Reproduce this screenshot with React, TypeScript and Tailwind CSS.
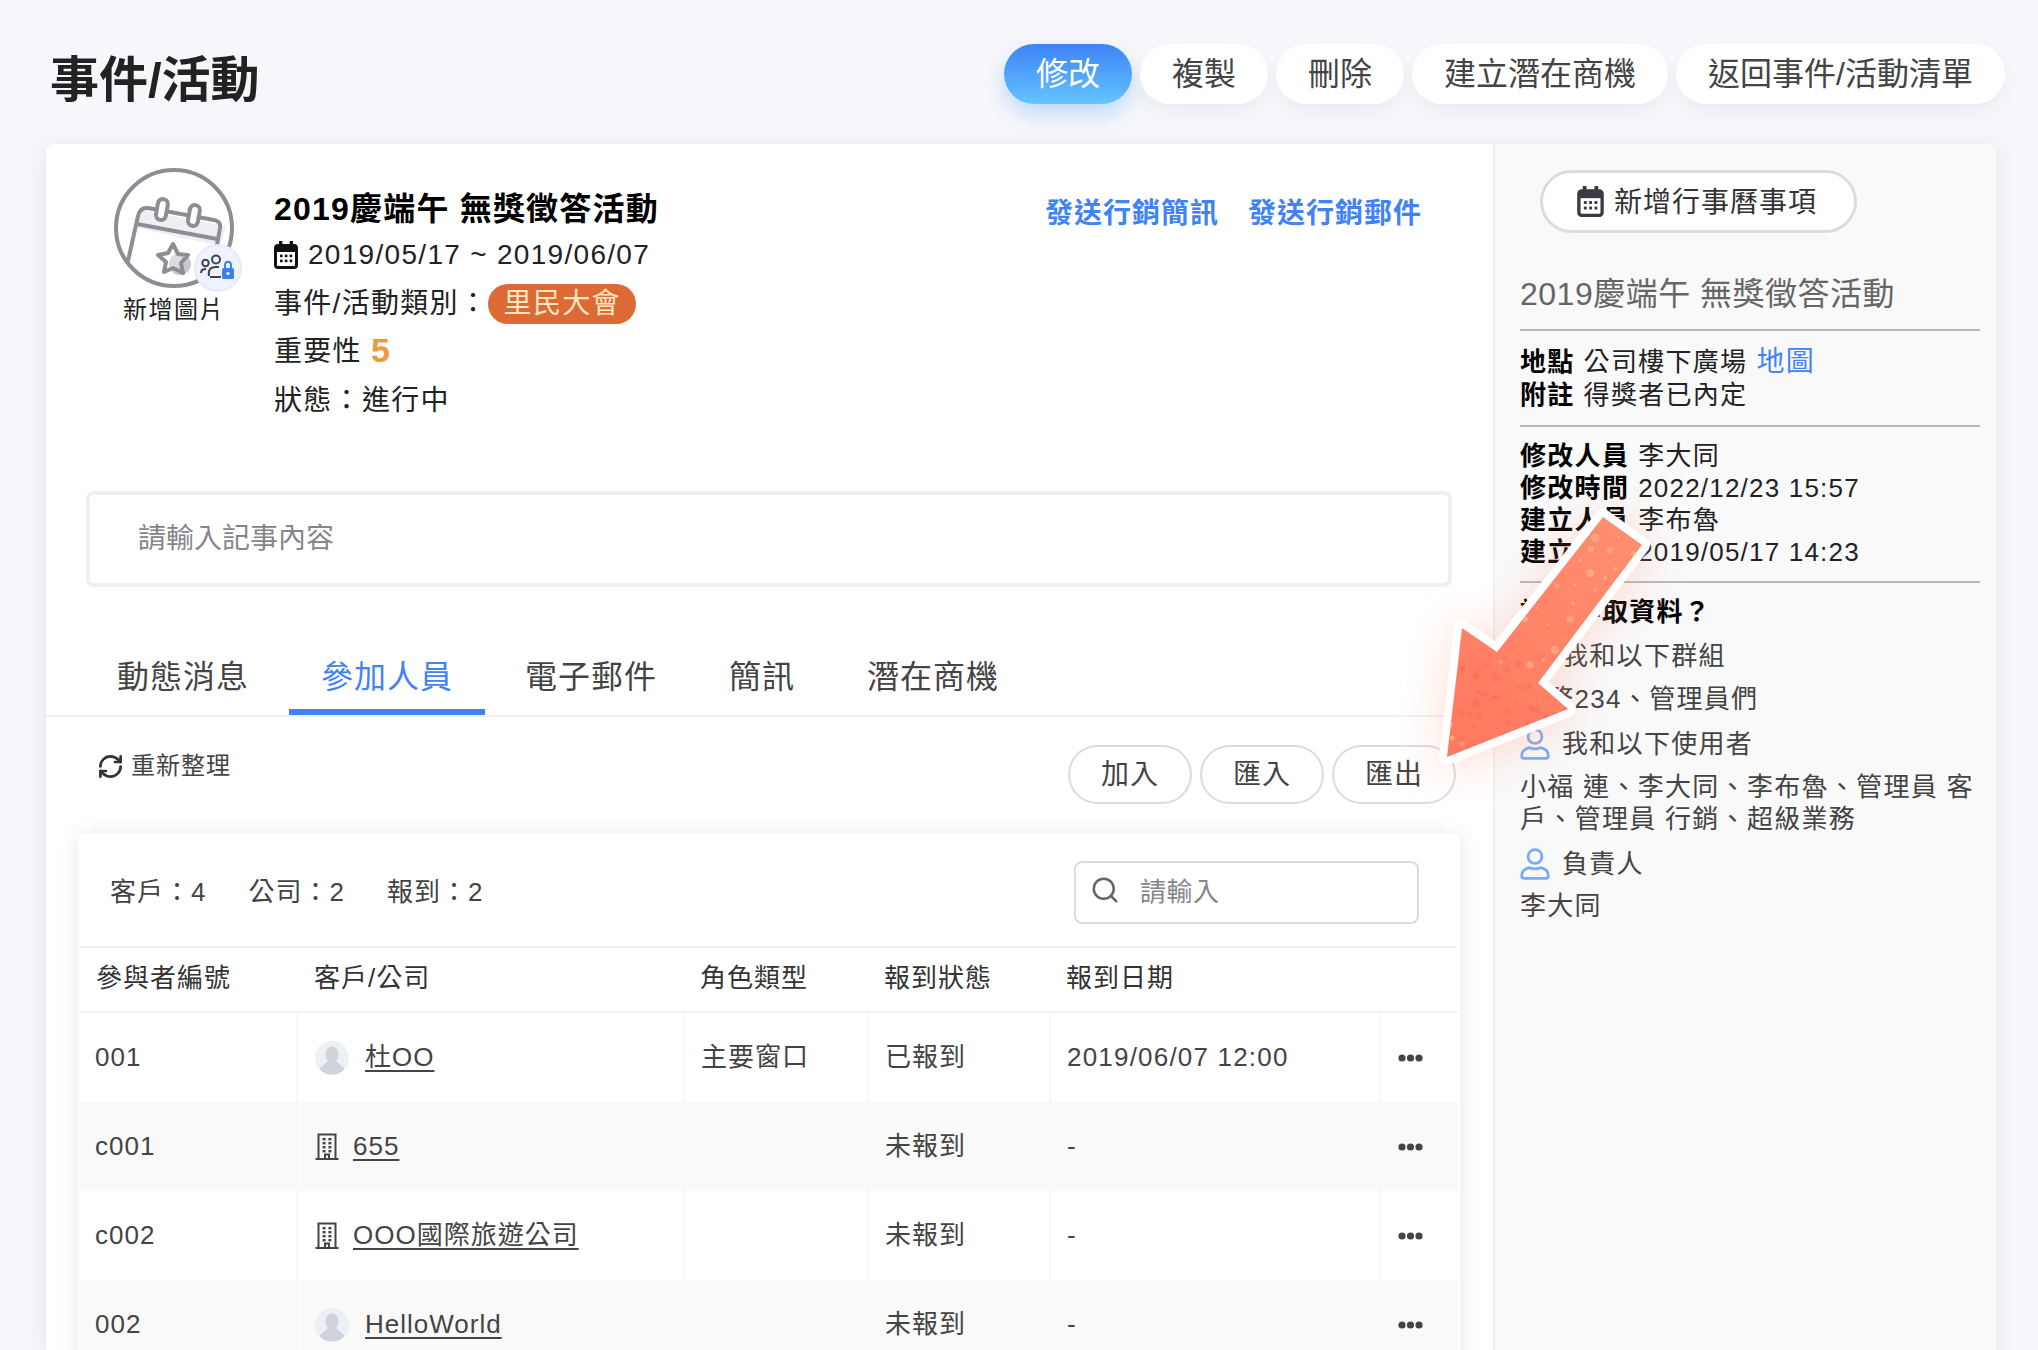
import { RefreshCw, Search } from "lucide-react";

function CalIcon({ className, color }: { className: string; color: string }) {
  return (
    <svg viewBox="0 0 24 28" className={className} fill="none">
      <rect x="1.5" y="4.5" width="21" height="22" rx="2.5" stroke={color} strokeWidth="3" />
      <rect x="1.5" y="4.5" width="21" height="6.5" fill={color} />
      <rect x="5" y="0" width="3.4" height="6" fill={color} />
      <rect x="15.6" y="0" width="3.4" height="6" fill={color} />
      {[6, 10.8, 15.6].map((x) => (
        <g key={x}>
          <rect x={x} y="13.6" width="2.6" height="2.6" fill={color} />
          <rect x={x} y="18.6" width="2.6" height="2.6" fill={color} />
        </g>
      ))}
    </svg>
  );
}

function PersonIcon() {
  return (
    <svg viewBox="0 0 28 30" className="w-[30px] h-[32px] shrink-0" fill="none" stroke="#7aaaf5" strokeWidth="2.6">
      <circle cx="14" cy="8" r="6.5" />
      <path d="M4 28.5H24Q26.5 28.5 26.5 26Q26.5 20 19 18.5Q14 20.5 9 18.5Q1.5 20 1.5 26Q1.5 28.5 4 28.5Z" />
    </svg>
  );
}

function Avatar() {
  return (
    <svg viewBox="0 0 34 34" className="w-[34px] h-[34px] shrink-0">
      <defs>
        <clipPath id="avc">
          <circle cx="17" cy="17" r="16.5" />
        </clipPath>
      </defs>
      <circle cx="17" cy="17" r="17" fill="#eef0f7" />
      <g clipPath="url(#avc)" fill="#d0d2dc">
        <ellipse cx="17" cy="13.5" rx="6.5" ry="8" />
        <path d="M13 20L5 27V34H29V27L21 20Z" />
      </g>
    </svg>
  );
}

function Building() {
  return (
    <svg viewBox="0 0 24 27" className="w-[24px] h-[27px] shrink-0" fill="none" stroke="#444" strokeWidth="2">
      <path d="M3.5 26V1.5H20.5V26" />
      <path d="M0.5 26H23.5" />
      <path d="M10 26V21.5H14V26" />
      <g fill="#444" stroke="none">
        {[5, 9, 13, 17].map((y) => (
          <g key={y}>
            <rect x="7.6" y={y} width="3" height="2.4" />
            <rect x="13.4" y={y} width="3" height="2.4" />
          </g>
        ))}
      </g>
    </svg>
  );
}

function Dots() {
  return (
    <svg viewBox="0 0 25 10" className="w-[25px] h-[10px]" fill="#444">
      <circle cx="4" cy="5" r="3.6" />
      <circle cx="12.5" cy="5" r="3.6" />
      <circle cx="21" cy="5" r="3.6" />
    </svg>
  );
}

function AvatarArt() {
  return (
    <div className="relative w-[120px] h-[120px]">
      <svg viewBox="0 0 120 120" className="w-[120px] h-[120px]" fill="none">
        <defs>
          <clipPath id="cc">
            <circle cx="60" cy="60" r="58" />
          </clipPath>
        </defs>
        <g clipPath="url(#cc)">
          <path d="M26 42L112 58L106 78L23 60Z" fill="#efeff1" />
          <path
            d="M8 120L24 48Q26 39 34 40L100 52Q107 53 106 60L101 88"
            stroke="#8e8d96"
            strokeWidth="4"
            strokeLinejoin="round"
          />
          <path d="M23 56L103 71" stroke="#8e8d96" strokeWidth="4" />
          <circle cx="66" cy="96" r="11" fill="#c9c9ce" />
          <path
            d="M59 76L64 86L74 87L67 95L69 105L59 100L50 104L52 94L44 87L54 85Z"
            fill="#fff"
            fillOpacity="0.35"
            stroke="#8e8d96"
            strokeWidth="4"
            strokeLinejoin="round"
          />
        </g>
        <rect x="43" y="31" width="10" height="21" rx="5" fill="#fff" stroke="#8e8d96" strokeWidth="4" transform="rotate(10 48 41)" />
        <rect x="75" y="37" width="10" height="21" rx="5" fill="#fff" stroke="#8e8d96" strokeWidth="4" transform="rotate(10 80 47)" />
        <circle cx="60" cy="60" r="58" stroke="#8e8d96" strokeWidth="4" />
      </svg>
      <div className="absolute left-[80px] top-[76px] w-[48px] h-[48px] rounded-full bg-[#eef3fd] border-2 border-[#e3ebfb] flex items-center justify-center">
        <svg viewBox="0 0 36 28" className="w-[36px] h-[28px]" fill="none" stroke="#3d4150" strokeWidth="2">
          <circle cx="5.5" cy="9" r="3.2" />
          <path d="M1 19C1 16 3 15 6 15" />
          <circle cx="16" cy="5.5" r="4" />
          <path d="M9 22C8 16 10 13 16 13H19" />
          <path d="M10 23H21" />
          <path d="M25 14V11.5C25 6.5 31 6.5 31 11.5V14" stroke="#3b7ff2" />
          <rect x="22" y="14" width="12" height="11" rx="1.5" fill="#3b7ff2" stroke="none" />
          <circle cx="28" cy="19.5" r="1.6" fill="#fff" stroke="none" />
        </svg>
      </div>
    </div>
  );
}

function lcg(n: number) {
  const out: { x: number; y: number; r: number }[] = [];
  let s = 12345;
  const next = () => {
    s = (s * 1103515245 + 12345) % 2147483648;
    return s / 2147483648;
  };
  for (let i = 0; i < n; i++) {
    const x = 27 + next() * 125;
    const y = 165 + next() * 105;
    out.push({ x, y, r: 0.8 + next() * 3 });
  }
  return out;
}

const arrowPts = "27,267 42,138 77,162 183,27 222,55 118,193 148,219";
const speckles: [number, number, number][] = [
  [175, 48, 4],
  [190, 60, 3],
  [170, 83, 4],
  [137, 96, 2.5],
  [150, 129, 3.5],
  [135, 160, 4],
  [110, 175, 3.5],
  [105, 129, 3],
  [81, 172, 2],
  [185, 88, 2],
  [213, 63, 2.5],
  [32, 248, 2.5],
  [42, 254, 2.5],
  [30, 235, 3],
  [171, 59, 3],
  [195, 79, 2],
  [175, 100, 2],
  [153, 113, 2],
  [123, 170, 2],
  [155, 95, 1.5],
  [160, 70, 1.5],
  [128, 135, 1.2],
  [145, 150, 1.2],
  [199, 47, 1.5],
  [117, 118, 1.3],
  [96, 150, 1.2],
];
const blotches = lcg(120);

function Arrow() {
  return (
    <svg
      viewBox="0 0 250 300"
      className="absolute left-[1420px] top-[490px] w-[250px] h-[300px] drop-shadow-[0_4px_22px_rgba(255,150,110,0.32)]"
    >
      <defs>
        <linearGradient id="ag" x1="0.8" y1="0" x2="0.1" y2="1">
          <stop offset="0" stopColor="#ff8d70" />
          <stop offset="1" stopColor="#ff7a60" />
        </linearGradient>
        <clipPath id="ac">
          <polygon points={arrowPts} />
        </clipPath>
      </defs>
      <polygon points={arrowPts} fill="#fff" stroke="#fff" strokeWidth="16" strokeLinejoin="round" />
      <polygon points={arrowPts} fill="url(#ag)" />
      <g clipPath="url(#ac)">
        {blotches.map((b, i) => (
          <circle key={i} cx={b.x} cy={b.y} r={b.r} fill="#f9524f" fillOpacity="0.16" />
        ))}
        {speckles.map(([x, y, r], i) => (
          <circle key={i} cx={x} cy={y} r={r} fill="#ffc08c" fillOpacity="0.55" />
        ))}
      </g>
    </svg>
  );
}

const rows = [
  { id: "001", kind: "p", name: "杜OO", role: "主要窗口", st: "已報到", date: "2019/06/07 12:00" },
  { id: "c001", kind: "c", name: "655", role: "", st: "未報到", date: "-" },
  { id: "c002", kind: "c", name: "OOO國際旅遊公司", role: "", st: "未報到", date: "-" },
  { id: "002", kind: "p", name: "HelloWorld", role: "", st: "未報到", date: "-" },
];

const tabs = ["動態消息", "參加人員", "電子郵件", "簡訊", "潛在商機"];
const topBtns = ["複製", "刪除", "建立潛在商機", "返回事件/活動清單"];

export default function App() {
  return (
    <div className="relative h-[1350px] overflow-hidden bg-[#f6f7fa] tracking-[1px] [font-family:'Liberation_Sans','Noto_Sans_CJK_TC',sans-serif]">
      {/* header */}
      <div className="h-[144px] pl-[50px] pr-[33px] pt-[46px] flex items-start justify-between">
        <h1 className="text-[49px] leading-[68px] font-bold tracking-normal text-[#222]">事件/活動</h1>
        <div className="mt-[-2px] flex gap-2 tracking-normal">
          <button className="h-[60px] px-8 rounded-full text-[32px] text-white bg-gradient-to-b from-[#3f82f5] to-[#66c4ff] shadow-[0_10px_20px_rgba(70,150,250,0.3)]">
            修改
          </button>
          {topBtns.map((t) => (
            <button
              key={t}
              className="h-[60px] px-8 rounded-full text-[32px] text-[#444] bg-white shadow-[0_8px_16px_rgba(50,60,100,0.06)]"
            >
              {t}
            </button>
          ))}
        </div>
      </div>

      {/* main card */}
      <div className="ml-[46px] mr-[42px] h-[1206px] flex rounded-t-lg bg-white shadow-[0_4px_20px_rgba(60,70,110,0.1)] overflow-hidden">
        {/* left column */}
        <div className="w-[1447px] shrink-0 flex flex-col">
          <div className="h-[347px] shrink-0 pl-[68px] pr-[71px] pt-[24px] flex items-start justify-between">
            <div className="flex items-start">
              <div className="w-[120px] mr-[40px] flex flex-col items-center">
                <AvatarArt />
                <div className="mt-[6px] text-[24px] leading-[32px] tracking-[1.5px] text-[#222] whitespace-nowrap">新增圖片</div>
              </div>
              <div className="pt-[18px] text-[#222] tracking-[1.3px]">
                <div className="h-[46px] flex items-center text-[32px] tracking-[1.2px] font-bold text-black whitespace-pre">2019慶端午 無獎徵答活動</div>
                <div className="h-[48px] mt-[-1px] flex items-center text-[28px]">
                  <CalIcon className="w-[24px] h-[28px] mr-[10px]" color="#111" />
                  <span>2019/05/17 ~ 2019/06/07</span>
                </div>
                <div className="h-[48px] mt-[1px] flex items-center text-[28px]">
                  <span>事件/活動類別：</span>
                  <span className="h-[40px] w-[148px] rounded-full bg-[#dc6a35] text-[#ffe6c2] flex items-center justify-center">里民大會</span>
                </div>
                <div className="h-[48px] flex items-center text-[28px]">
                  <span>重要性</span>
                  <span className="ml-[9px] mb-[3px] text-[34px] font-bold text-[#ee9a3c]">5</span>
                </div>
                <div className="h-[50px] flex items-center text-[28px]">狀態：進行中</div>
              </div>
            </div>
            <div className="mt-[26px] flex gap-[29px] text-[28px] leading-[40px] font-semibold text-[#3f83f5]">
              <span>發送行銷簡訊</span>
              <span>發送行銷郵件</span>
            </div>
          </div>

          <div className="shrink-0 ml-[40px] mr-[41px] h-[96px] px-[48px] border-4 border-[#efeff1] rounded-lg flex items-center text-[28px] text-[#85858a] tracking-[0px]">
            請輸入記事內容
          </div>

          <div className="shrink-0 mt-[52px] h-[78px] pl-[39px] flex gap-2 border-b-2 border-[#f0f0f2] text-[32px] tracking-[1px] text-[#444]">
            {tabs.map((t, i) => (
              <div
                key={t}
                className={
                  i === 1
                    ? "h-[76px] px-8 flex items-center text-[#3f83f5] border-b-[6px] border-[#3f83f5] pt-[6px]"
                    : "h-[76px] px-8 flex items-center"
                }
              >
                {t}
              </div>
            ))}
          </div>

          <div className="shrink-0 pt-[28px] pl-[51px] pr-[37px] flex justify-between items-start">
            <div className="h-[42px] flex items-center gap-[7px] text-[24px] text-[#444]">
              <RefreshCw className="w-[27px] h-[27px] text-[#333]" strokeWidth={2.4} />
              <span>重新整理</span>
            </div>
            <div className="flex gap-2">
              {["加入", "匯入", "匯出"].map((t) => (
                <button
                  key={t}
                  className="w-[124px] h-[59px] rounded-full border-2 border-[#dcdce0] bg-white text-[28px] text-[#444]"
                >
                  {t}
                </button>
              ))}
            </div>
          </div>

          {/* table card */}
          <div className="shrink-0 mt-[29px] ml-[32px] mr-[33px] px-[2px] h-[600px] rounded-t-lg bg-white shadow-[0_2px_20px_rgba(50,60,90,0.13)] text-[26px] text-[#444]">
            <div className="h-[113px] pt-[6px] pl-[30px] pr-[39px] flex items-center justify-between">
              <div className="flex gap-[42px]">
                <span>客戶：4</span>
                <span>公司：2</span>
                <span>報到：2</span>
              </div>
              <div className="w-[345px] h-[63px] rounded-lg border-2 border-[#dcdce0] flex items-center pl-[14px] text-[#85858a] tracking-[0.5px]">
                <Search className="w-[30px] h-[30px] text-[#666] mr-[20px] mt-[-5px]" strokeWidth={2} />
                <span>請輸入</span>
              </div>
            </div>
            <div className="h-[67px] pb-[2px] flex items-center border-y-2 border-[#f2f2f3] text-[#333]">
              <div className="w-[218px] pl-[16px]">參與者編號</div>
              <div className="w-[387px] pl-[16px]">客戶/公司</div>
              <div className="w-[184px] pl-[15px]">角色類型</div>
              <div className="w-[182px] pl-[15px]">報到狀態</div>
              <div className="pl-[15px]">報到日期</div>
            </div>
            {rows.map((r, i) => (
              <div key={r.id} className={i % 2 ? "h-[89px] flex bg-[#f9f9f9]" : "h-[89px] flex"}>
                <div className="w-[218px] pl-[15px] flex items-center border-r-2 border-[#f7f7f8]">{r.id}</div>
                <div className="w-[387px] pl-[17px] flex items-center border-r-2 border-[#f7f7f8]">
                  {r.kind === "p" ? <Avatar /> : <Building />}
                  <span className={r.kind === "p" ? "ml-[16px] underline underline-offset-4" : "ml-[14px] underline underline-offset-4"}>
                    {r.name}
                  </span>
                </div>
                <div className="w-[184px] pl-[16px] flex items-center border-r-2 border-[#f7f7f8]">{r.role}</div>
                <div className="w-[182px] pl-[16px] flex items-center border-r-2 border-[#f7f7f8]">{r.st}</div>
                <div className="w-[330px] pl-[16px] flex items-center tracking-[1.2px] border-r-2 border-[#f7f7f8]">{r.date}</div>
                <div className="flex-1 pl-[17px] flex items-center">
                  <Dots />
                </div>
              </div>
            ))}
          </div>
        </div>

        {/* sidebar */}
        <aside className="flex-1 bg-[#f9f9fa] border-l-2 border-[#f0f0f2] pl-[25px] pr-[16px] pt-[26px] text-[26px] leading-[32px] tracking-[1.3px] text-[#222]">
          <div className="ml-[20px] w-[317px] h-[63px] pt-[2px] rounded-full border-[3px] border-[#dcdce0] bg-white flex items-center pl-[34px] text-[28px] tracking-[1px] text-[#333]">
            <CalIcon className="w-[27px] h-[31px] mr-[10px] mt-[-3px]" color="#3a3a42" />
            <span>新增行事曆事項</span>
          </div>
          <div className="mt-[41px] h-[40px] flex items-center text-[32px] tracking-[0.5px] text-[#666] whitespace-pre">2019慶端午 無獎徵答活動</div>
          <div className="mt-[15px] h-[2px] bg-[#b8b8ba]" />
          <div className="mt-[14px]">
            <div className="h-[34px] flex items-center">
              <b className="font-bold text-black">地點</b>
              <span className="ml-[9px]">公司樓下廣場</span>
              <span className="ml-[9px] text-[28px] text-[#3f83f5]">地圖</span>
            </div>
            <div>
              <b className="font-bold text-black">附註</b>
              <span className="ml-[9px]">得獎者已內定</span>
            </div>
          </div>
          <div className="mt-[14px] h-[2px] bg-[#b8b8ba]" />
          <div className="mt-[13px]">
            <div>
              <b className="font-bold text-black">修改人員</b>
              <span className="ml-[9px]">李大同</span>
            </div>
            <div>
              <b className="font-bold text-black">修改時間</b>
              <span className="ml-[9px] tracking-[1.2px]">2022/12/23 15:57</span>
            </div>
            <div>
              <b className="font-bold text-black">建立人員</b>
              <span className="ml-[9px]">李布魯</span>
            </div>
            <div>
              <b className="font-bold text-black">建立時間</b>
              <span className="ml-[9px] tracking-[1.2px]">2019/05/17 14:23</span>
            </div>
          </div>
          <div className="mt-[13px] h-[2px] bg-[#b8b8ba]" />
          <div className="mt-[13px] font-bold text-black">誰可存取資料？</div>
          <div className="mt-[12px] flex items-center gap-[12px] text-[#444]">
            <PersonIcon />
            <span>我和以下群組</span>
          </div>
          <div className="mt-[11px] text-[#444]">業務234、管理員們</div>
          <div className="mt-[13px] flex items-center gap-[12px] text-[#444]">
            <PersonIcon />
            <span>我和以下使用者</span>
          </div>
          <div className="mt-[11px] text-[#444]">小福 連、李大同、李布魯、管理員 客戶、管理員 行銷、超級業務</div>
          <div className="mt-[13px] flex items-center gap-[12px] text-[#444]">
            <PersonIcon />
            <span>負責人</span>
          </div>
          <div className="mt-[10px] text-[#444]">李大同</div>
        </aside>
      </div>

      <Arrow />
    </div>
  );
}
